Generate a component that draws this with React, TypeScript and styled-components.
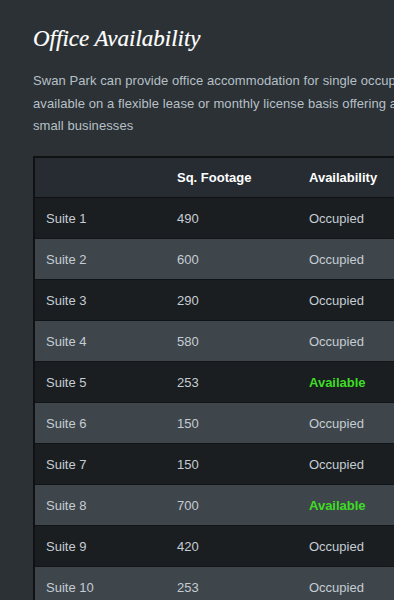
import React from 'react';
import styled, { createGlobalStyle } from 'styled-components';

type Suite = { name: string; size: number; available: boolean };

const suites: Suite[] = [
  { name: 'Suite 1', size: 490, available: false },
  { name: 'Suite 2', size: 600, available: false },
  { name: 'Suite 3', size: 290, available: false },
  { name: 'Suite 4', size: 580, available: false },
  { name: 'Suite 5', size: 253, available: true },
  { name: 'Suite 6', size: 150, available: false },
  { name: 'Suite 7', size: 150, available: false },
  { name: 'Suite 8', size: 700, available: true },
  { name: 'Suite 9', size: 420, available: false },
  { name: 'Suite 10', size: 253, available: false },
];

const App: React.FC = () => (
  <>
    <GlobalStyle />
    <Page>
      <Title>Office Availability</Title>
      <Intro>
        Swan Park can provide office accommodation for single occupiers or small teams,
        <br />
        available on a flexible lease or monthly license basis offering an ideal home for
        <br />
        small businesses
      </Intro>

      <Table>
        <thead>
          <tr>
            <HeadCell />
            <HeadCell>Sq. Footage</HeadCell>
            <HeadCell>Availability</HeadCell>
          </tr>
        </thead>
        <tbody>
          {suites.map((suite, index) => (
            <Row key={suite.name} $light={index % 2 === 1}>
              <Cell>{suite.name}</Cell>
              <Cell>{suite.size}</Cell>
              <Cell $available={suite.available}>
                {suite.available ? 'Available' : 'Occupied'}
              </Cell>
            </Row>
          ))}
        </tbody>
      </Table>
    </Page>
  </>
);

const GlobalStyle = createGlobalStyle`
  html, body {
    margin: 0;
    background: #2b3134;
    overflow: hidden;
  }
`;

const Page = styled.main`
  width: 700px;
  padding: 25px 0 0 33px;
  font-family: 'Liberation Sans', Arial, sans-serif;
`;

const Title = styled.h1`
  margin: 0;
  font-family: 'Liberation Serif', Georgia, serif;
  font-style: italic;
  font-weight: normal;
  font-size: 23px;
  line-height: 28px;
  color: #ffffff;
  -webkit-text-stroke: 0.2px #ffffff;
`;

const Intro = styled.p`
  margin: 17px 0 0;
  font-size: 13px;
  line-height: 22.5px;
  letter-spacing: 0.08px;
  color: #b7c0c8;
  white-space: nowrap;
`;

const Table = styled.table`
  margin-top: 18px;
  border-collapse: collapse;
  border: 2px solid #0f1113;
  table-layout: fixed;
`;

const HeadCell = styled.th`
  box-sizing: border-box;
  width: 132px;
  height: 41px;
  padding: 0 11px;
  text-align: left;
  font-size: 13px;
  font-weight: bold;
  color: #ffffff;
  background: #262c31;
  border-bottom: 1px solid #0f1113;
`;

const Row = styled.tr<{ $light: boolean }>`
  background: ${(p) => (p.$light ? '#3e464b' : '#1a1e21')};
  border-bottom: 1px solid #121517;
`;

const Cell = styled.td<{ $available?: boolean }>`
  height: 40px;
  padding: 0 11px;
  font-size: 13px;
  color: ${(p) => (p.$available ? '#3fdc25' : '#c5cdd4')};
  font-weight: ${(p) => (p.$available ? 'bold' : 'normal')};
`;

export default App;
